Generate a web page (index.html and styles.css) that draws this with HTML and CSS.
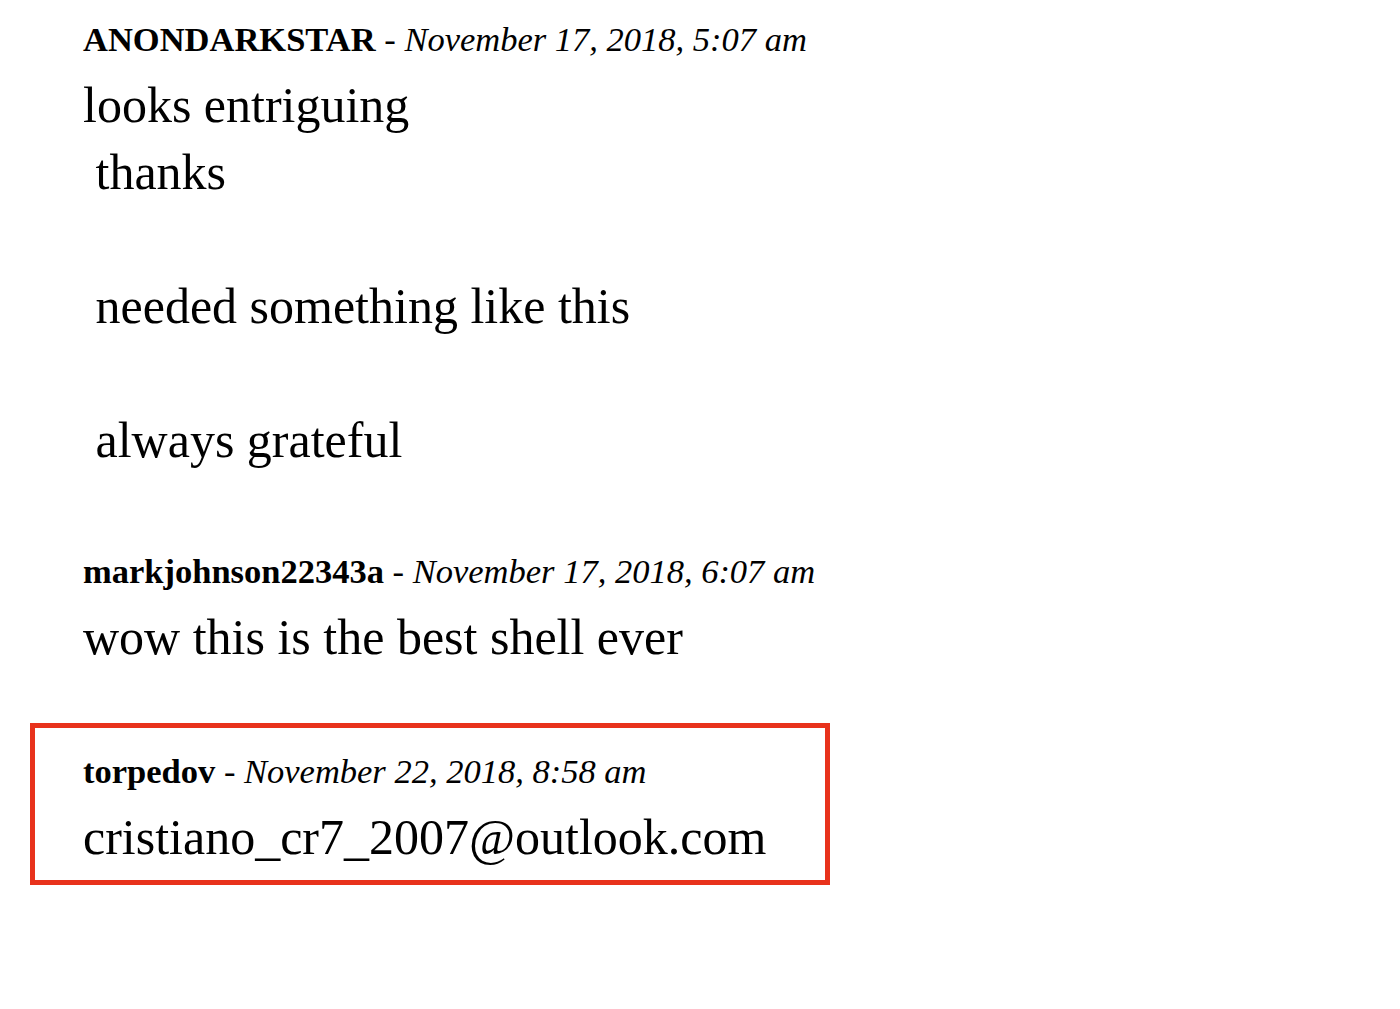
FILE: index.html
```html
<!DOCTYPE html>
<html lang="en">
<head>
    <meta charset="UTF-8">
    <meta name="viewport" content="width=device-width, initial-scale=1.0">
    <title>Comments</title>
    <link rel="stylesheet" href="styles.css">
</head>
<body>
    <div class="comments">
        <!-- comment 1 -->
        <div class="comment">
            <div class="comment-meta"><b>ANONDARKSTAR</b> - <i>November 17, 2018, 5:07 am</i></div>
            <div class="comment-text multiline">looks entriguing
 thanks

 needed something like this

 always grateful</div>
        </div>

        <!-- comment 2 -->
        <div class="comment">
            <div class="comment-meta"><b>markjohnson22343a</b> - <i>November 17, 2018, 6:07 am</i></div>
            <div class="comment-text">wow this is the best shell ever</div>
        </div>

        <!-- comment 3 (flagged) -->
        <div class="comment flagged">
            <div class="comment-meta"><b>torpedov</b> - <i>November 22, 2018, 8:58 am</i></div>
            <div class="comment-text">cristiano_cr7_2007@outlook.com</div>
        </div>
    </div>
</body>
</html>
```

FILE: styles.css
```css
* {
    margin: 0;
    padding: 0;
    box-sizing: border-box;
}

body {
    font-family: "Liberation Serif", "Times New Roman", serif;
    background-color: #fff;
    color: #000;
}

.comments {
    padding: 14px 0 0 30px;
}

.comment {
    width: 800px;
    border: 5px solid transparent;
    padding-left: 48px;
    margin-bottom: 47px;
}

.comment-meta {
    font-size: 34.5px;
    line-height: 40px;
    margin-bottom: 13px;
    white-space: nowrap;
}

.comment-text {
    font-size: 50px;
    line-height: 67px;
    white-space: pre-wrap;
}

.comment-text.multiline {
    margin-bottom: 20px;
}

.comment.flagged {
    border-color: #e8321c;
    padding-top: 23px;
    padding-bottom: 9px;
}
```
